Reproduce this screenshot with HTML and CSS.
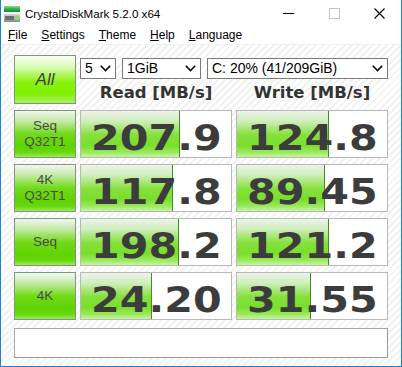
FILE: index.html
```html
<!DOCTYPE html>
<html>
<head>
<meta charset="utf-8">
<title>CrystalDiskMark 5.2.0 x64</title>
<link rel="stylesheet" href="styles.css">
</head>
<body>
<div class="window">
  <div class="titlebar">
    <svg class="app-icon" width="16" height="16" viewBox="0 0 16 16">
      <defs>
        <linearGradient id="ig" x1="0" y1="0" x2="0" y2="1">
          <stop offset="0" stop-color="#8ee08e"/>
          <stop offset="0.5" stop-color="#2fae4a"/>
          <stop offset="1" stop-color="#1f8a36"/>
        </linearGradient>
        <linearGradient id="ib" x1="0" y1="0" x2="0" y2="1">
          <stop offset="0" stop-color="#d6d6d6"/>
          <stop offset="1" stop-color="#8a8a8a"/>
        </linearGradient>
      </defs>
      <rect x="0" y="0" width="16" height="6" fill="url(#ig)"/>
      <rect x="0" y="8" width="16" height="8" fill="url(#ib)"/>
      <rect x="1" y="10" width="9" height="4" fill="#6f6f6f"/>
      <rect x="11" y="10" width="4" height="4" fill="#7ee07e"/>
    </svg>
    <span class="title">CrystalDiskMark 5.2.0 x64</span>
    <div class="winctrls">
      <div class="wbtn"><svg width="11" height="11" viewBox="0 0 11 11"><line x1="0" y1="5.5" x2="11" y2="5.5" stroke="#000" stroke-width="1"/></svg></div>
      <div class="wbtn"><svg width="11" height="11" viewBox="0 0 11 11"><rect x="0.5" y="0.5" width="10" height="10" fill="none" stroke="#c4c4c4" stroke-width="1"/></svg></div>
      <div class="wbtn close"><svg width="11" height="11" viewBox="0 0 11 11"><path d="M0.5 0.5 L10.5 10.5 M10.5 0.5 L0.5 10.5" stroke="#000" stroke-width="1.1" fill="none"/></svg></div>
    </div>
  </div>
  <div class="menubar">
    <span class="menu"><u>F</u>ile</span>
    <span class="menu"><u>S</u>ettings</span>
    <span class="menu"><u>T</u>heme</span>
    <span class="menu"><u>H</u>elp</span>
    <span class="menu"><u>L</u>anguage</span>
  </div>
  <div class="content">
    <div class="grid">
      <div class="label all">All</div>
      <div class="controls">
        <div class="selects">
          <div class="select s-count"><span>5</span><svg class="chev" width="11" height="7" viewBox="0 0 11 7"><path d="M0.8 0.8 L5.5 5.6 L10.2 0.8" fill="none" stroke="#000" stroke-width="1.5"/></svg></div>
          <div class="select s-size"><span>1GiB</span><svg class="chev" width="11" height="7" viewBox="0 0 11 7"><path d="M0.8 0.8 L5.5 5.6 L10.2 0.8" fill="none" stroke="#000" stroke-width="1.5"/></svg></div>
          <div class="select s-drive"><span>C: 20% (41/209GiB)</span><svg class="chev" width="11" height="7" viewBox="0 0 11 7"><path d="M0.8 0.8 L5.5 5.6 L10.2 0.8" fill="none" stroke="#000" stroke-width="1.5"/></svg></div>
        </div>
        <div class="heads">
          <div class="head">Read [MB/s]</div>
          <div class="head">Write [MB/s]</div>
        </div>
      </div>

      <div class="label"><span>Seq</span><span>Q32T1</span></div>
      <div class="cell"><div class="bar" style="width:99px"></div><span class="num">207.9</span></div>
      <div class="cell"><div class="bar" style="width:92px"></div><span class="num">124.8</span></div>

      <div class="label"><span>4K</span><span>Q32T1</span></div>
      <div class="cell"><div class="bar" style="width:92px"></div><span class="num">117.8</span></div>
      <div class="cell"><div class="bar" style="width:88px"></div><span class="num">89.45</span></div>

      <div class="label"><span>Seq</span></div>
      <div class="cell"><div class="bar" style="width:98px"></div><span class="num">198.2</span></div>
      <div class="cell"><div class="bar" style="width:92px"></div><span class="num">121.2</span></div>

      <div class="label"><span>4K</span></div>
      <div class="cell"><div class="bar" style="width:71px"></div><span class="num">24.20</span></div>
      <div class="cell"><div class="bar" style="width:74px"></div><span class="num">31.55</span></div>
    </div>
    <div class="comment"></div>
  </div>
</div>
</body>
</html>
```
FILE: styles.css
```css
* { box-sizing: border-box; margin: 0; padding: 0; }
html, body { width: 402px; height: 367px; overflow: hidden; background: #fff; }
body { font-family: "Liberation Sans", Arial, sans-serif; color: #000; }

.window {
  width: 402px;
  height: 367px;
  border: 1px solid #1883d7;
  border-top: none;
  display: flex;
  flex-direction: column;
  background: #fff;
}

.titlebar { height: 27px; display: flex; align-items: center; flex-shrink: 0; }
.app-icon { margin-left: 3px; display: block; }
.title { margin-left: 5px; font-size: 11.6px; line-height: 27px; }
.winctrls { margin-left: auto; display: flex; height: 27px; }
.wbtn { width: 46px; height: 27px; display: flex; align-items: center; justify-content: center; }
.wbtn.close { width: 44px; }
.wbtn svg { display: block; }

.menubar {
  height: 18px;
  display: flex;
  gap: 14px;
  padding-left: 7px;
  font-size: 12px;
  line-height: 17px;
  border-bottom: 1px solid #f0f0f0;
  flex-shrink: 0;
}
.menu u { text-decoration: underline; text-underline-offset: 1px; }

.content {
  flex: 1;
  padding: 10px 13px 0 13px;
  background: repeating-linear-gradient(135deg, #ffffff 0 2px, #f2f2f2 2px 4px, #ffffff 4px 5px);
}

.grid {
  display: grid;
  grid-template-columns: 62px 152px 152px;
  grid-template-rows: 49px repeat(4, 48px);
  column-gap: 4px;
  row-gap: 6px;
}

.label {
  border: 1px solid #7f977f;
  background: linear-gradient(#f2f6f0 0%, #c4eaa6 22%, #72da18 50%, #5ed400 78%, #6ad810 90%, #9aea58 100%);
  display: flex;
  flex-direction: column;
  align-items: center;
  justify-content: center;
  font-size: 13.5px;
  line-height: 16px;
  color: #4a4a4a;
}
.label.all {
  background: linear-gradient(#fbfff6 0%, #d6fbb0 25%, #8af20e 55%, #80f000 80%, #a8f460 100%);
  font-size: 17px;
  font-style: italic;
  color: #404040;
}

.controls { grid-column: 2 / 4; display: flex; flex-direction: column; padding-top: 3px; }
.selects { display: flex; gap: 6px; height: 21px; }
.select {
  height: 21px;
  border: 1px solid #7a7a7a;
  background: #fff;
  display: flex;
  align-items: center;
  justify-content: space-between;
  padding: 0 4px 0 4px;
  font-size: 14px;
  line-height: 19px;
}
.s-count { width: 36px; }
.s-size { width: 79px; }
.s-drive { width: 181px; }
.chev { display: block; }

.heads { display: grid; grid-template-columns: 152px 152px; column-gap: 4px; }
.head {
  text-align: center;
  font-family: "DejaVu Sans", sans-serif;
  font-weight: bold;
  font-size: 16.5px;
  line-height: 28px;
  color: #333;
}

.cell {
  position: relative;
  border: 1px solid #b8b8b8;
  background: #fff;
  display: flex;
  justify-content: flex-end;
  padding: 7px 9px 0 0;
  overflow: hidden;
}
.bar {
  position: absolute;
  left: 0; top: 0; bottom: 0;
  border-right: 1px solid #3f8f1f;
  background: linear-gradient(#eef2ec 0%, #cfeebb 22%, #86e03c 52%, #7ade2c 75%, #9aea5c 90%, #c6f6a2 100%);
}
.num {
  position: relative;
  display: inline-block;
  font-family: "DejaVu Sans", sans-serif;
  font-weight: bold;
  font-size: 35px;
  line-height: 40px;
  color: #3c3c3c;
  transform: scaleX(1.18);
  transform-origin: right center;
}

.comment {
  margin-top: 8px;
  height: 30px;
  border: 1px solid #a8a8a8;
  border-right-color: #9a9a9a;
  border-bottom-color: #9a9a9a;
  background: #fff;
}
```
